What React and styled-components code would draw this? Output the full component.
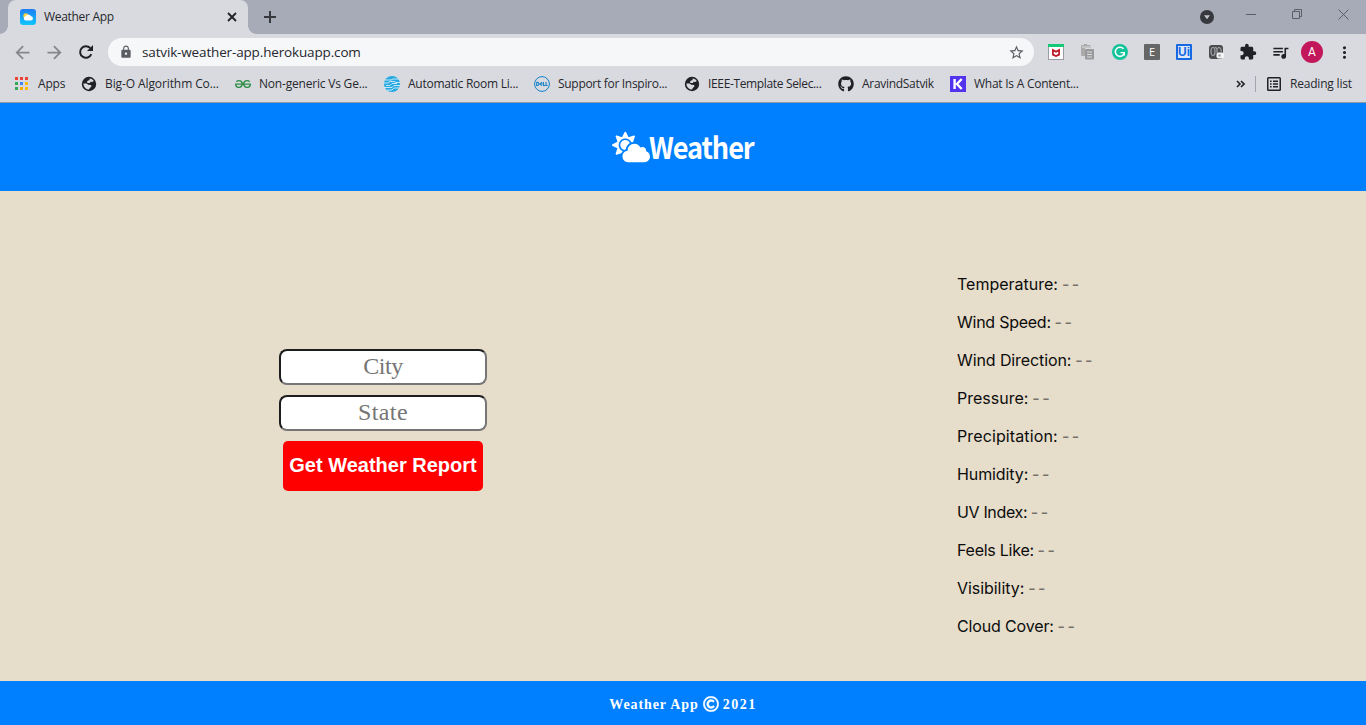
import React from 'react';
import styled, { createGlobalStyle } from 'styled-components';
import { MdArrowBack, MdArrowForward, MdLock, MdStarBorder, MdExtension, MdQueueMusic, MdMoreVert } from 'react-icons/md';
import { FaCloudSun, FaGithub, FaRegCopyright } from 'react-icons/fa';
import { SiGeeksforgeeks } from 'react-icons/si';

const GlobalStyle = createGlobalStyle`
  *, *::before, *::after { box-sizing: border-box; }
  body { margin: 0; overflow: hidden; font-family: "Open Sans", "Noto Sans", sans-serif; }
  svg { display: block; flex: none; }
`;

const Window = styled.div`
  width: 1366px;
  height: 725px;
  display: flex;
  flex-direction: column;
  background: #e6ddca;
`;

const TabStrip = styled.div`
  height: 34px;
  flex: none;
  display: flex;
  background: #a7abb7;
  padding-left: 8px;
`;

const Tab = styled.div`
  position: relative;
  width: 240px;
  height: 34px;
  display: flex;
  align-items: center;
  padding: 0 10px 0 12px;
  background: #d9dae0;
  border-radius: 8px 8px 0 0;
  &::before, &::after {
    content: "";
    position: absolute;
    bottom: 0;
    width: 8px;
    height: 8px;
  }
  &::before { left: -8px; background: radial-gradient(circle at 0 0, transparent 7.5px, #d9dae0 8px); }
  &::after { right: -8px; background: radial-gradient(circle at 100% 0, transparent 7.5px, #d9dae0 8px); }
`;

const Label = styled.span`
  font-size: ${(p) => p.$size || 12}px;
  line-height: 18px;
  letter-spacing: ${(p) => p.$ls ?? -0.2}px;
  color: #26282d;
  white-space: nowrap;
`;

const TabTitle = styled(Label)`
  flex: 1;
  margin-left: 8px;
`;

const NewTab = styled.div`
  margin: 11px 0 0 16px;
`;

const WindowControls = styled.div`
  display: flex;
  margin-left: auto;
  padding: 9px 17px 0 0;
`;

const Control = styled.div`
  width: ${(p) => p.$w}px;
  padding-top: ${(p) => p.$top || 0}px;
`;

const Toolbar = styled.div`
  height: 36px;
  flex: none;
  display: flex;
  align-items: center;
  background: #d9dae0;
  padding-left: 12px;
`;

const NavButton = styled.div`
  width: 32px;
  flex: none;
  color: ${(p) => (p.$active ? '#202124' : '#84868b')};
`;

const AddressBar = styled.div`
  width: 926px;
  flex: none;
  height: 28px;
  margin-right: 14px;
  padding: 0 9px 0 11px;
  display: flex;
  align-items: center;
  border-radius: 14px;
  background: #f6f7f9;
  color: #5a5d62;
`;

const Url = styled(Label)`
  flex: 1;
  margin-left: 9px;
`;

const Extensions = styled.div`
  display: flex;
  align-items: center;
`;

const Extension = styled.div`
  width: 32px;
  height: 24px;
  flex: none;
  display: flex;
  align-items: center;
  color: #202124;
  &:last-child { width: 30px; }
`;

const ToolbarAction = styled(Extension)`
  & > svg { margin-left: -1.5px; }
`;

const LetterTile = styled.span`
  width: 16px;
  height: 16px;
  border-radius: 1px;
  background: #666;
  color: #fff;
  font-size: 11px;
  line-height: 16px;
  text-align: center;
`;

const UiTile = styled(LetterTile)`
  display: flex;
  justify-content: center;
  border: 2px solid #1768e3;
  background: #dce7f8;
  color: #1768e3;
  font: 700 12px/13px "Liberation Sans", sans-serif;
`;

const Avatar = styled.span`
  width: 22px;
  height: 22px;
  margin-left: -3px;
  border-radius: 50%;
  background: #c2185b;
  color: #fff;
  font: 12px/22px Roboto, sans-serif;
  text-align: center;
`;

const BookmarksBar = styled.div`
  height: 33px;
  flex: none;
  display: flex;
  padding: 5px 14px 0 14px;
  background: #d9dae0;
  border-bottom: 1px solid #93979f;
`;

const Bookmark = styled.div`
  width: ${(p) => p.$w}px;
  height: 18px;
  display: flex;
  align-items: center;
  gap: 8px;
  color: #202124;
`;

const KTile = styled.span`
  width: 16px;
  height: 16px;
  background: #5333ed;
`;

const BarEnd = styled.div`
  height: 18px;
  margin-left: auto;
  display: flex;
  align-items: center;
`;

const Divider = styled.span`
  width: 1px;
  height: 16px;
  margin: 0 11px 0 10px;
  background: #a2a5ac;
`;

const ReadingLabel = styled(Label)`
  width: 62px;
  margin-left: 9px;
`;

const Header = styled.header`
  height: 88px;
  flex: none;
  display: flex;
  align-items: center;
  justify-content: center;
  background: #0080ff;
  color: #fff;
`;

const Brand = styled.h1`
  width: 106px;
  margin: 0 0 2px -1px;
  font: 700 30px/40px "Noto Sans CJK JP", "Open Sans", sans-serif;
  letter-spacing: -1.2px;
  white-space: nowrap;
  transform: scaleX(0.905);
  transform-origin: left;
`;

const Main = styled.main`
  height: 490px;
  flex: none;
  display: flex;
`;

const FormPane = styled.form`
  width: 766px;
  padding-top: 158px;
  display: flex;
  flex-direction: column;
  align-items: center;
  gap: 10px;
`;

const Field = styled.input`
  width: 208px;
  height: 36px;
  padding: 0 2px 2px;
  border: 2px solid;
  border-color: #1d1d1f #767676 #767676 #1d1d1f;
  border-radius: 8px;
  background: #fff;
  text-align: center;
  font: 24px/30px "Liberation Serif", serif;
  letter-spacing: ${(p) => p.$ls}px;
  &::placeholder { color: #757575; opacity: 1; }
`;

const Submit = styled.button`
  width: 200px;
  height: 50px;
  padding: 0 0 2px;
  border: 0;
  border-radius: 5px;
  background: #f00;
  color: #fff;
  font: 700 20px "Liberation Sans", Arial, sans-serif;
  white-space: nowrap;
`;

const Report = styled.section`
  padding: 74px 0 0 191px;
`;

const Reading = styled.div`
  height: 38px;
  font: 16px/38px Inter, sans-serif;
  letter-spacing: ${(p) => p.$ls}px;
  color: #0c0c0c;
  white-space: nowrap;
`;

const Value = styled.span`
  margin-left: -0.5px;
  font-weight: 500;
  letter-spacing: -0.9px;
  color: #75716a;
`;

const Footer = styled.footer`
  height: 44px;
  flex: none;
  display: flex;
  justify-content: center;
  align-items: center;
  gap: 4px;
  padding-top: 3px;
  background: #0080ff;
  color: #fff;
  font: 700 14px/20px "Liberation Serif", serif;
  letter-spacing: 0.9px;
  svg { stroke: #fff; stroke-width: 14px; margin-bottom: 2px; }
`;

const Year = styled.span`
  letter-spacing: 1.5px;
`;

const WeatherFavicon = () => (
  <svg width="16" height="16" viewBox="0 0 16 16">
    <defs><linearGradient id="sky" x2="0" y2="1"><stop stopColor="#1d7df5" /><stop offset="1" stopColor="#11c8fb" /></linearGradient></defs>
    <rect width="16" height="16" rx="3" fill="url(#sky)" />
    <circle cx="5.8" cy="6.8" r="2.5" fill="#ffd52e" />
    <path d="M5.5 11.5a2.2 2.2 0 0 1 0-4.3 3 3 0 0 1 5.5 0 2.2 2.2 0 0 1 .3 4.3z" fill="#fff" />
  </svg>
);

const ReloadIcon = () => (
  <svg width="20" height="20" viewBox="0 0 20 20">
    <path d="M15.3 12.2A5.8 5.8 0 1 1 14.3 6.2" fill="none" stroke="#202124" strokeWidth="2" />
    <path d="M17 3v6h-6z" fill="#202124" />
  </svg>
);

const AppsGrid = () => (
  <svg width="16" height="16" viewBox="0 0 16 16">
    {['#ea4335', '#ea4335', '#ea4335', '#34a853', '#4285f4', '#fbbc04', '#34a853', '#f9ab00', '#fbbc04'].map((c, i) => (
      <rect key={i} x={1 + (i % 3) * 5} y={1 + Math.floor(i / 3) * 5} width="3" height="3" fill={c} />
    ))}
  </svg>
);

const GlobeIcon = () => (
  <svg width="16" height="16" viewBox="0 0 16 16">
    <circle cx="8" cy="8" r="7.2" fill="#202124" />
    <path d="M8.6 2.4c1.8.1 3.3 1 4.2 2.6l-1.6 1-1.7-.2-.6 1.1-2.4.2-.6-1.4 1.2-1.2 1.4-.3zM2.4 7.5l3.3.1 1.5 1.2 2.8.1.5 1.4-1.4 1.4-1.2 1.8c-3 0-5.3-2.5-5.5-6z" fill="#d9dae0" />
  </svg>
);

const CircuitIcon = () => (
  <svg width="16" height="16" viewBox="0 0 16 16">
    <circle cx="8" cy="8" r="8" fill="#25a9e0" />
    <g stroke="#d9eef7" strokeWidth=".9" fill="none">
      <path d="M1 4h6l2-1h6M0 7h4l2-1.5h4l2 1h4M2 9.5h4l2-2h5M0 11.5h8l2-2h6M3 14h5l2-2h5" />
    </g>
  </svg>
);

const DellIcon = () => (
  <svg width="16" height="16" viewBox="0 0 16 16" fill="none" stroke="#1282c8">
    <circle cx="8" cy="8" r="7.4" />
    <path d="M2.7 6.3v3.2h.8q1.4 0 1.4-1.6T3.5 6.3zM8 6.4L6 7.9l2 1.6M6.4 7.8L8.4 7M9.4 6v3.5h1.8M12 6v3.5h1.7" strokeWidth="1.1" />
  </svg>
);

const ShieldIcon = () => (
  <svg width="16" height="16" viewBox="0 0 16 16">
    <rect x=".5" y=".5" width="15" height="15" fill="#fff" stroke="#9b9da2" />
    <path d="M0 0h16v3H0z" fill="#16c875" />
    <path d="M4.9 5.9v4.7L8 12l3.1-1.4V5.9L8 7.7z" fill="none" stroke="#bf1726" strokeWidth="1.7" />
  </svg>
);

const ClipboardIcon = () => (
  <svg width="16" height="16" viewBox="0 0 16 16">
    <path d="M1.5 1H4V0h3v1h2.5q1 0 1 1v2H1zM1 3h4v9H2q-1 0-1-1z" fill="#aaa" />
    <path d="M2 3h8" stroke="#ddd" />
    <rect x="5" y="5" width="9" height="10.5" rx="1" fill="#999" />
    <path d="M7 8h5M7 10.5h5M7 13h5" stroke="#d9dae0" />
  </svg>
);

const GrammarIcon = () => (
  <svg width="16" height="16" viewBox="0 0 16 16" fill="none">
    <circle cx="8" cy="8" r="8" fill="#15c39a" />
    <path d="M11.5 4.8A4.6 4.6 0 1 0 12.4 9" stroke="#fff" strokeWidth="1.5" />
    <path d="M8.5 8.6h3.8v3" stroke="#fff" strokeWidth="1.4" />
  </svg>
);

const MaskIcon = () => (
  <svg width="16" height="16" viewBox="0 0 16 16">
    <rect x="1" y="1" width="14" height="14" rx="3" fill="#4b4c4e" />
    <ellipse cx="5" cy="7.5" rx="2" ry="4" fill="none" stroke="#a5a6a8" strokeWidth="1.2" />
    <path d="M6.5 4q1.5-1 2.5 1v4M9.5 4.5Q11 2.5 12.5 4.5T13 8" fill="none" stroke="#a5a6a8" strokeWidth="1.2" />
    <rect x="8.5" y="8.5" width="7.5" height="6" rx="2" fill="#f4f4f4" />
    <path d="M10.5 10.5h2v2h-2z" fill="#8b8c8f" />
  </svg>
);

const KIcon = () => (
  <KTile>
    <svg width="16" height="16" viewBox="0 0 16 16" fill="none" stroke="#fff" strokeWidth="2.4"><path d="M4.6 3v10M11.7 3L7 8l4.7 5" /></svg>
  </KTile>
);

const ReadingListIcon = () => (
  <svg width="14" height="14" viewBox="0 0 14 14" fill="none" stroke="#202124">
    <rect x=".75" y=".75" width="12.5" height="12.5" rx=".8" strokeWidth="1.5" />
    <path d="M3 4.3h1.6M3 7h1.6M3 9.7h1.6M6 4.3h5M6 7h5M6 9.7h5" strokeWidth="1.4" />
  </svg>
);

const bookmarks = [
  ['Apps', 67, AppsGrid, -0.2],
  ['Big-O Algorithm Co...', 154, GlobeIcon, -0.1],
  ['Non-generic Vs Ge...', 149, SiGeeksforgeeks, -0.2, '#2f8d46'],
  ['Automatic Room Li...', 150, CircuitIcon, -0.25],
  ['Support for Inspiro...', 150, DellIcon, -0.3],
  ['IEEE-Template Selec...', 154, GlobeIcon, -0.35],
  ['AravindSatvik', 112, FaGithub, -0.3],
  ['What Is A Content...', 140, KIcon, -0.25],
];

const readings = [
  ['Temperature', 0],
  ['Wind Speed', -0.25],
  ['Wind Direction', -0.1],
  ['Pressure', 0],
  ['Precipitation', 0.12],
  ['Humidity', -0.1],
  ['UV Index', -0.35],
  ['Feels Like', -0.25],
  ['Visibility', -0.05],
  ['Cloud Cover', -0.15],
];

export default function App() {
  return (
    <Window>
      <GlobalStyle />
      <TabStrip>
        <Tab>
          <WeatherFavicon />
          <TabTitle $ls={-0.3}>Weather App</TabTitle>
          <svg width="12" height="12" viewBox="0 0 12 12" stroke="#202124" strokeWidth="1.8"><path d="M2 2l8 8M10 2l-8 8" /></svg>
        </Tab>
        <NewTab><svg width="12" height="12" viewBox="0 0 12 12" stroke="#36383d" strokeWidth="2"><path d="M0 6h12M6 0v12" /></svg></NewTab>
        <WindowControls>
          <Control $w={46} $top={1}>
            <svg width="14" height="14" viewBox="0 0 14 14"><circle cx="7" cy="7" r="7" fill="#36383d" /><path d="M4 5.3h6L7 9.3z" fill="#c4c6ce" /></svg>
          </Control>
          <Control $w={46}><svg width="10" height="12" stroke="#5c5f67"><path d="M0 5.5h10" /></svg></Control>
          <Control $w={46}><svg width="11" height="11" fill="none" stroke="#5c5f67"><path d="M.5 2.5h7v7h-7zM2.5 2.5V.5h7v7h-2" /></svg></Control>
          <Control $w={11}><svg width="11" height="11" stroke="#5c5f67"><path d="M.5 .5l10 10M10.5 .5l-10 10" /></svg></Control>
        </WindowControls>
      </TabStrip>
      <Toolbar>
        <NavButton><MdArrowBack size={21} /></NavButton>
        <NavButton><MdArrowForward size={21} /></NavButton>
        <NavButton $active><ReloadIcon /></NavButton>
        <AddressBar>
          <MdLock size={14} />
          <Url $size={13.5} $ls={-0.15}>satvik-weather-app.herokuapp.com</Url>
          <MdStarBorder size={17} />
        </AddressBar>
        <Extensions>
          <Extension><ShieldIcon /></Extension>
          <Extension><ClipboardIcon /></Extension>
          <Extension><GrammarIcon /></Extension>
          <Extension><LetterTile>E</LetterTile></Extension>
          <Extension><UiTile>Ui</UiTile></Extension>
          <Extension><MaskIcon /></Extension>
          <ToolbarAction><MdExtension size={18} /></ToolbarAction>
          <ToolbarAction><MdQueueMusic size={19} /></ToolbarAction>
          <Extension><Avatar>A</Avatar></Extension>
          <ToolbarAction><MdMoreVert size={19} /></ToolbarAction>
        </Extensions>
      </Toolbar>
      <BookmarksBar>
        {bookmarks.map(([title, width, Icon, spacing, color]) => (
          <Bookmark key={title} $w={width}>
            <Icon size={16} color={color} />
            <Label $ls={spacing}>{title}</Label>
          </Bookmark>
        ))}
        <BarEnd>
          <svg width="9" height="8" viewBox="0 0 9 8" fill="none" stroke="#202124" strokeWidth="1.6"><path d="M1 1l3 3-3 3M5 1l3 3-3 3" /></svg>
          <Divider />
          <ReadingListIcon />
          <ReadingLabel>Reading list</ReadingLabel>
        </BarEnd>
      </BookmarksBar>
      <Header>
        <FaCloudSun size={38} />
        <Brand>Weather</Brand>
      </Header>
      <Main>
        <FormPane>
          <Field placeholder="City" $ls={-0.4} />
          <Field placeholder="State" $ls={0.4} />
          <Submit type="button">Get Weather Report</Submit>
        </FormPane>
        <Report>
          {readings.map(([name, spacing]) => (
            <Reading key={name} $ls={spacing}>{name}: <Value>- -</Value></Reading>
          ))}
        </Report>
      </Main>
      <Footer>
        <span>Weather App</span>
        <FaRegCopyright size={16} />
        <Year>2021</Year>
      </Footer>
    </Window>
  );
}
